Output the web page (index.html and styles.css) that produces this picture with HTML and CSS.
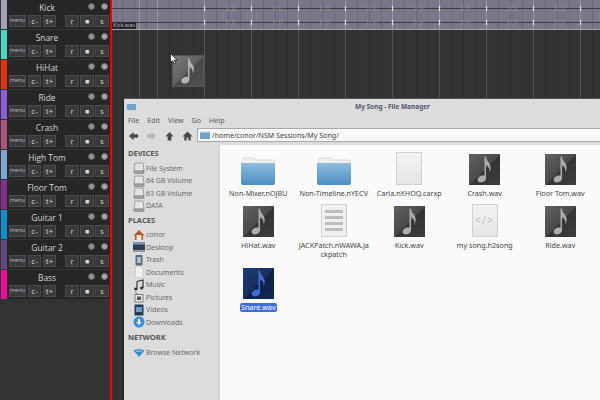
FILE: index.html
```html
<!DOCTYPE html>
<html lang="en">

<head>
    <meta charset="UTF-8">
    <title>My Song - File Manager</title>
    <link rel="stylesheet" href="styles.css">
</head>

<body>
    <svg class="defs" width="0" height="0">
        <defs>
            <linearGradient id="gGrey" x1="0" y1="0" x2="1" y2="1">
                <stop offset="0" stop-color="#626262" />
                <stop offset="0.5" stop-color="#4a4a4a" />
                <stop offset="0.52" stop-color="#343434" />
                <stop offset="1" stop-color="#3e3e3e" />
            </linearGradient>
            <linearGradient id="gDrag" x1="0" y1="0" x2="1" y2="1">
                <stop offset="0" stop-color="#7a7a7a" />
                <stop offset="0.5" stop-color="#606060" />
                <stop offset="0.52" stop-color="#484848" />
                <stop offset="1" stop-color="#505050" />
            </linearGradient>
            <linearGradient id="gBlue" x1="0" y1="0" x2="1" y2="1">
                <stop offset="0" stop-color="#1f3c78" />
                <stop offset="0.5" stop-color="#18305f" />
                <stop offset="0.52" stop-color="#0f2048" />
                <stop offset="1" stop-color="#14285a" />
            </linearGradient>
            <linearGradient id="gFolder" x1="0" y1="0" x2="0" y2="1">
                <stop offset="0" stop-color="#8fbcdc" />
                <stop offset="1" stop-color="#4a8fc4" />
            </linearGradient>
            <symbol id="note" viewBox="0 0 30 30">
                <path d="M15 2.500h1.300c.4 3 1.700 4.400 3.100 6.200 1.700 2.200 2.300 5.300.4 9.300 .4-3.600-.7-6-3.300-7.300v12.500c0 2.400-2.400 4.300-5 4.300-2 0-3.200-1-3.200-2.500 0-2.500 2.700-4.300 5-4.300.7 0 1.300.1 1.700.4z" />
            </symbol>
            <symbol id="folder" viewBox="0 0 34 28">
                <path d="M2 3q0-2 2-2h9l2 2h17q2 0 2 2v4H2z" fill="#f0f0f0" stroke="#c8c8c8" stroke-width=".6" />
                <path d="M0 6h34v20q0 2-2 2H2q-2 0-2-2z" fill="url(#gFolder)" />
            </symbol>
            <symbol id="drive" viewBox="0 0 12 12">
                <path d="M2 1h8l1 8H1z" fill="#e4e4e4" stroke="#8d8d8d" stroke-width=".8" />
                <rect x="1" y="9" width="10" height="2.500" fill="#a0a0a0" stroke="#777" stroke-width=".5" />
            </symbol>
        </defs>
    </svg>

    <div class="app">
        <div class="tracks">
            <div class="track">
                <div class="strip c-kick"></div>
                <div class="track-body">
                    <div class="track-top"><span class="track-name">Kick</span><i class="dot"></i><i class="dot alt"></i></div>
                    <div class="track-btns"><b class="btn w-menu">menu</b><b class="btn">c-</b><b class="btn">t+</b><b class="btn wide right">r</b><b class="btn wide">■</b><b class="btn wide">s</b></div>
                </div>
            </div>
            <div class="track">
                <div class="strip c-snare"></div>
                <div class="track-body">
                    <div class="track-top"><span class="track-name">Snare</span><i class="dot"></i><i class="dot alt"></i></div>
                    <div class="track-btns"><b class="btn w-menu">menu</b><b class="btn">c-</b><b class="btn">t+</b><b class="btn wide right">r</b><b class="btn wide">■</b><b class="btn wide">s</b></div>
                </div>
            </div>
            <div class="track">
                <div class="strip c-hihat"></div>
                <div class="track-body">
                    <div class="track-top"><span class="track-name">HiHat</span><i class="dot"></i><i class="dot alt"></i></div>
                    <div class="track-btns"><b class="btn w-menu">menu</b><b class="btn">c-</b><b class="btn">t+</b><b class="btn wide right">r</b><b class="btn wide">■</b><b class="btn wide">s</b></div>
                </div>
            </div>
            <div class="track">
                <div class="strip c-ride"></div>
                <div class="track-body">
                    <div class="track-top"><span class="track-name">Ride</span><i class="dot"></i><i class="dot alt"></i></div>
                    <div class="track-btns"><b class="btn w-menu">menu</b><b class="btn">c-</b><b class="btn">t+</b><b class="btn wide right">r</b><b class="btn wide">■</b><b class="btn wide">s</b></div>
                </div>
            </div>
            <div class="track">
                <div class="strip c-crash"></div>
                <div class="track-body">
                    <div class="track-top"><span class="track-name">Crash</span><i class="dot"></i><i class="dot alt"></i></div>
                    <div class="track-btns"><b class="btn w-menu">menu</b><b class="btn">c-</b><b class="btn">t+</b><b class="btn wide right">r</b><b class="btn wide">■</b><b class="btn wide">s</b></div>
                </div>
            </div>
            <div class="track">
                <div class="strip c-high"></div>
                <div class="track-body">
                    <div class="track-top"><span class="track-name">High Tom</span><i class="dot"></i><i class="dot alt"></i></div>
                    <div class="track-btns"><b class="btn w-menu">menu</b><b class="btn">c-</b><b class="btn">t+</b><b class="btn wide right">r</b><b class="btn wide">■</b><b class="btn wide">s</b></div>
                </div>
            </div>
            <div class="track">
                <div class="strip c-floor"></div>
                <div class="track-body">
                    <div class="track-top"><span class="track-name">Floor Tom</span><i class="dot"></i><i class="dot alt"></i></div>
                    <div class="track-btns"><b class="btn w-menu">menu</b><b class="btn">c-</b><b class="btn">t+</b><b class="btn wide right">r</b><b class="btn wide">■</b><b class="btn wide">s</b></div>
                </div>
            </div>
            <div class="track">
                <div class="strip c-gtr1"></div>
                <div class="track-body">
                    <div class="track-top"><span class="track-name">Guitar 1</span><i class="dot"></i><i class="dot alt"></i></div>
                    <div class="track-btns"><b class="btn w-menu">menu</b><b class="btn">c-</b><b class="btn">t+</b><b class="btn wide right">r</b><b class="btn wide">■</b><b class="btn wide">s</b></div>
                </div>
            </div>
            <div class="track">
                <div class="strip c-gtr2"></div>
                <div class="track-body">
                    <div class="track-top"><span class="track-name">Guitar 2</span><i class="dot"></i><i class="dot alt"></i></div>
                    <div class="track-btns"><b class="btn w-menu">menu</b><b class="btn">c-</b><b class="btn">t+</b><b class="btn wide right">r</b><b class="btn wide">■</b><b class="btn wide">s</b></div>
                </div>
            </div>
            <div class="track">
                <div class="strip c-bass"></div>
                <div class="track-body">
                    <div class="track-top"><span class="track-name">Bass</span><i class="dot"></i><i class="dot alt"></i></div>
                    <div class="track-btns"><b class="btn w-menu">menu</b><b class="btn">c-</b><b class="btn">t+</b><b class="btn wide right">r</b><b class="btn wide">■</b><b class="btn wide">s</b></div>
                </div>
            </div>
        </div>

        <div class="timeline">
            <div class="clip">
                <svg class="wave" width="488" height="29">
                    <defs>
                        <pattern id="hits" x="0" y="0" width="47" height="29" patternUnits="userSpaceOnUse">
                            <path d="M45.500 6v5M45.500 20v5" stroke="#e4e4e8" stroke-width="1.200" />
                            <path d="M21 6.500v4l2-2zM27 6.500v4l2-2zM21 20.500v4l2-2zM27 20.500v4l2-2z" fill="#2c2a32" stroke="#c8c6d0" stroke-width=".5" />
                        </pattern>
                    </defs>
                    <path d="M0 8.500h488M0 22.500h488" stroke="#3c3a44" stroke-width="1.200" />
                    <rect x="90" width="398" height="29" fill="url(#hits)" />
                </svg>
                <span class="clip-label">Kick.wav</span>
            </div>
        </div>
    </div>

    <div class="drag-icon"><svg width="30" height="30">
            <rect width="30" height="30" fill="url(#gDrag)" />
            <use href="#note" width="30" height="30" fill="#b4b4b4" />
        </svg></div>
    <svg class="cursor" width="8" height="12" viewBox="0 0 8 12">
        <path d="M.5.500v9l2.200-2 1.500 3.500 1.500-.7-1.500-3.300h3z" fill="#fff" stroke="#111" stroke-width=".7" />
    </svg>

    <div class="window">
        <div class="titlebar">
            <svg class="title-icon" width="9" height="8" viewBox="0 0 9 8">
                <rect width="9" height="8" fill="#6fa3cb" />
                <rect width="9" height="2" fill="#d9e3ea" />
            </svg>
            <span class="title-text">My Song - File Manager</span>
        </div>
        <div class="menubar"><span>File</span><span>Edit</span><span>View</span><span>Go</span><span>Help</span></div>
        <div class="toolbar">
            <svg class="tool" width="11" height="12" viewBox="0 0 12 12"><path d="M6 1.500 1 6l5 4.500V8h5V4H6z" fill="#4a4a4a" /></svg>
            <svg class="tool" width="11" height="12" viewBox="0 0 12 12"><path d="M6 1.500 11 6l-5 4.500V8H1V4h5z" fill="#b4b4b4" /></svg>
            <svg class="tool" width="11" height="12" viewBox="0 0 12 12"><path d="M6 1.500 1.500 6.500H4V11h4V6.500h2.500z" fill="#4a4a4a" /></svg>
            <svg class="tool" width="11" height="12" viewBox="0 0 12 12"><path d="M6 1 .5 6.500H2.500V11H5V8h2v3h2.500V6.500h2z" fill="#4a4a4a" /></svg>
            <div class="path-entry">
                <svg width="10" height="8" viewBox="0 0 10 8"><rect width="10" height="8" fill="#6fa3cb" /><rect width="10" height="1.500" fill="#d9e3ea" /></svg>
                <span>/home/conor/NSM Sessions/My Song/</span>
            </div>
        </div>
        <div class="panes">
            <div class="side">
                <h4>DEVICES</h4>
                <ul>
                    <li><svg width="12" height="12"><use href="#drive" /></svg>File System</li>
                    <li><svg width="12" height="12"><use href="#drive" /></svg>64 GB Volume</li>
                    <li><svg width="12" height="12"><use href="#drive" /></svg>63 GB Volume</li>
                    <li><svg width="12" height="12"><use href="#drive" /></svg>DATA</li>
                </ul>
                <h4>PLACES</h4>
                <ul>
                    <li><svg width="12" height="12" viewBox="0 0 12 12"><path d="M6 1 .5 6.500H2V11h8V6.500h1.500z" fill="#b3552a" /><rect x="3.500" y="6" width="5" height="5" fill="#efe6d8" /></svg>conor</li>
                    <li><svg width="12" height="12" viewBox="0 0 12 12"><rect y="1.500" width="12" height="9" fill="#2f3d4e" /><rect y="1.500" width="12" height="2" fill="#7a9cc0" /><rect y="9" width="12" height="1.500" fill="#99a3ad" /></svg>Desktop</li>
                    <li><svg width="12" height="12" viewBox="0 0 12 12"><rect x="2.500" y="1" width="7" height="10.500" rx="1" fill="#5e6b78" /><rect x="4" y="3" width="4" height="6" fill="#a9bfd2" /></svg>Trash</li>
                    <li><svg width="12" height="12" viewBox="0 0 12 12"><path d="M2.500.500h5l2.500 3v8h-7.500z" fill="#f1f1f1" stroke="#c9c9c9" stroke-width=".7" /></svg>Documents</li>
                    <li><svg width="12" height="12" viewBox="0 0 12 12"><path d="M4 2.500 10 1v8M4 2.500V10.500" fill="none" stroke="#333" stroke-width="1.200" /><circle cx="2.700" cy="10" r="1.600" fill="#333" /><circle cx="8.700" cy="9" r="1.600" fill="#333" /></svg>Music</li>
                    <li><svg width="12" height="12" viewBox="0 0 12 12"><rect x="2" y="3.500" width="8" height="7.500" fill="#e6e6e6" stroke="#666" stroke-width=".8" /><rect x="4" y="5.500" width="4" height="3.500" fill="#555" /><path d="M2 1l3 2.500" stroke="#666" /></svg>Pictures</li>
                    <li><svg width="12" height="12" viewBox="0 0 12 12"><rect x="1.500" y=".500" width="9" height="11" fill="#233a55" /><rect x="3" y="3" width="6" height="5" fill="#6f9dc7" /></svg>Videos</li>
                    <li><svg width="12" height="12" viewBox="0 0 12 12"><circle cx="6" cy="6" r="5.500" fill="#3f8cd8" /><path d="M5 3h2v3h1.800L6 9 3.200 6H5z" fill="#fff" /></svg>Downloads</li>
                </ul>
                <h4 class="net">NETWORK</h4>
                <ul>
                    <li><svg width="12" height="12" viewBox="0 0 12 12"><path d="M.5 4.500Q6 1.500 11.500 4.500L6 11z" fill="#3d8ac9" /><path d="M3 5.500Q6 4 9 5.500" stroke="#cfe3f3" stroke-width=".8" fill="none" /></svg>Browse Network</li>
                </ul>
            </div>
            <div class="files">
                <div class="file"><div class="thumb"><svg width="34" height="28"><use href="#folder" /></svg></div><span>Non-Mixer.nOJBU</span></div>
                <div class="file"><div class="thumb"><svg width="34" height="28"><use href="#folder" /></svg></div><span>Non-Timeline.nYECV</span></div>
                <div class="file"><div class="thumb"><div class="page"></div></div><span>Carla.nXHOQ.carxp</span></div>
                <div class="file"><div class="thumb"><svg class="wav" width="31" height="31"><rect width="31" height="31" fill="url(#gGrey)" /><use href="#note" width="31" height="31" fill="#adadad" /></svg></div><span>Crash.wav</span></div>
                <div class="file"><div class="thumb"><svg class="wav" width="31" height="31"><rect width="31" height="31" fill="url(#gGrey)" /><use href="#note" width="31" height="31" fill="#adadad" /></svg></div><span>Floor Tom.wav</span></div>

                <div class="file"><div class="thumb"><svg class="wav" width="31" height="31"><rect width="31" height="31" fill="url(#gGrey)" /><use href="#note" width="31" height="31" fill="#adadad" /></svg></div><span>HiHat.wav</span></div>
                <div class="file"><div class="thumb"><div class="page lines"><i></i><i></i><i></i><i></i></div></div><span>JACKPatch.nWAWA.ja<br>ckpatch</span></div>
                <div class="file"><div class="thumb"><svg class="wav" width="31" height="31"><rect width="31" height="31" fill="url(#gGrey)" /><use href="#note" width="31" height="31" fill="#adadad" /></svg></div><span>Kick.wav</span></div>
                <div class="file"><div class="thumb"><div class="page code">&lt;/&gt;</div></div><span>my song.h2song</span></div>
                <div class="file"><div class="thumb"><svg class="wav" width="31" height="31"><rect width="31" height="31" fill="url(#gGrey)" /><use href="#note" width="31" height="31" fill="#adadad" /></svg></div><span>Ride.wav</span></div>

                <div class="file picked"><div class="thumb"><svg class="wav" width="31" height="31"><rect width="31" height="31" fill="url(#gBlue)" /><use href="#note" width="31" height="31" fill="#3f6fd0" /></svg></div><span>Snare.wav</span></div>
            </div>
        </div>
    </div>
</body>

</html>
```

FILE: styles.css
```css
* {
    padding: 0;
    margin: 0;
    box-sizing: border-box;
}
html, body {
    width: 600px;
    height: 400px;
    overflow: hidden;
}
body {
    position: relative;
    background: #333;
    font-family: "Noto Sans", "Open Sans", sans-serif;
}
li {
    list-style: none;
}
.defs {
    display: block;
    height: 0;
}
.app {
    display: flex;
    height: 400px;
}

/* track list */
.tracks {
    width: 110px;
    height: 400px;
    padding-left: 1px;
    background: #333;
    flex: none;
}
.track {
    display: flex;
    height: 30px;
    background: #262626;
    border-bottom: 1px solid #333;
}
.strip {
    width: 6px;
    flex: none;
}
.c-kick { background: #a4a2b8; }
.c-snare { background: #4fd5c2; }
.c-hihat { background: #e5330c; }
.c-ride { background: #8a5ed8; }
.c-crash { background: #a8557c; }
.c-high { background: #7fa6d2; }
.c-floor { background: #82308c; }
.c-gtr1 { background: #1190cc; }
.c-gtr2 { background: #5f4a80; }
.c-bass { background: #ec1098; }
.track-body {
    flex: 1;
    padding: 1px 0 0 2px;
}
.track-top {
    display: flex;
    align-items: flex-start;
    height: 14px;
}
.track-name {
    width: 76px;
    text-align: center;
    font-family: "Open Sans", sans-serif;
    font-size: 8.400px;
    line-height: 13px;
    color: #d8d8d8;
}
.dot {
    width: 7px;
    height: 7px;
    margin: 2px 3px 0 3px;
    border-radius: 50%;
    background: #8c8c8c;
    border: 1px solid #5c5c5c;
    box-shadow: inset 0 0 0 1px #a0a0a0;
}
.dot.alt {
    background: #a8a8a8;
    border-color: #707070;
}
.track-btns {
    display: flex;
    gap: 2px;
}
.btn {
    display: flex;
    align-items: center;
    justify-content: center;
    width: 13px;
    height: 12px;
    font-family: "Open Sans", sans-serif;
    font-weight: normal;
    font-size: 8px;
    line-height: 1;
    color: #dcdcdc;
    background: #3a3a3a;
    border: 1px solid #4c4c4c;
}
.w-menu {
    width: 17px;
    font-size: 5.500px;
    color: #b4bccc;
}
.wide {
    width: 14px;
    margin-right: -1px;
    font-size: 7px;
}
.right {
    margin-left: 7px;
}

/* timeline */
.timeline {
    flex: 1;
    height: 400px;
    border-left: 2px solid #f00000;
    background-color: #333;
    background-image:
        repeating-linear-gradient(90deg, #555 0, #555 1px, transparent 1px, transparent 47px),
        repeating-linear-gradient(90deg, #2c2c2c 0, #2c2c2c 1px, transparent 1px, transparent 11.750px);
    background-position: 45px 0, 10px 0;
}
.clip {
    position: relative;
    height: 30px;
    background-color: #7a7888;
    background-image:
        repeating-linear-gradient(90deg, #9a98a8 0, #9a98a8 1px, transparent 1px, transparent 47px),
        repeating-linear-gradient(90deg, #6b6979 0, #6b6979 1px, transparent 1px, transparent 11.750px);
    background-position: 45px 0, 10px 0;
    border-bottom: 1px solid #a5a3b1;
}
.wave {
    display: block;
}
.clip-label {
    position: absolute;
    left: 0;
    top: 22px;
    height: 7px;
    padding: 0 1px;
    background: #26262b;
    color: #b8b8b8;
    font-size: 5.500px;
    line-height: 7px;
}
.drag-icon {
    position: absolute;
    left: 173px;
    top: 56px;
    width: 30px;
    height: 30px;
    line-height: 0;
    outline: 1px solid #555;
}
.cursor {
    position: absolute;
    left: 170px;
    top: 53px;
}

/* file manager window */
.window {
    position: absolute;
    left: 123px;
    top: 98px;
    width: 477px;
    height: 302px;
    border-left: 1px solid #222;
    border-top: 1px solid #555;
    background: #dcdcdc;
    font-size: 7.100px;
    color: #555;
}
.titlebar {
    height: 14px;
    display: flex;
    align-items: center;
    padding-left: 3px;
}
.title-text {
    margin-left: 219px;
    font-weight: bold;
    font-size: 6.500px;
    color: #50566a;
}
.menubar {
    display: flex;
    gap: 8px;
    height: 14px;
    align-items: center;
    padding-left: 4px;
    color: #5a5a5a;
}
.toolbar {
    display: flex;
    align-items: center;
    gap: 7px;
    height: 18px;
    padding-left: 4px;
}
.path-entry {
    flex: 1;
    display: flex;
    align-items: center;
    gap: 2px;
    height: 14px;
    margin-left: -3px;
    margin-bottom: 2px;
    padding-left: 2px;
    background: #f8f8f8;
    border: 1px solid #a8a8a8;
    border-right: 0;
    color: #444;
}
.panes {
    display: flex;
    height: 256px;
}
.side {
    width: 96px;
    flex: none;
    padding: 2px 0 0 4px;
    font-size: 7px;
    border-right: 1px solid #cfcfcf;
}
.side h4 {
    font-size: 7.500px;
    height: 13px;
    line-height: 13px;
    color: #555;
}
.side .net {
    margin-top: 1px;
}
.side ul {
    padding: 2px 0 1.500px 5px;
}
.side li {
    display: flex;
    align-items: center;
    gap: 1px;
    height: 12.500px;
    color: #6a6a6a;
}
.side svg {
    flex: none;
}
.files {
    flex: 1;
    display: grid;
    grid-template-columns: repeat(5, 75.500px);
    grid-template-rows: 52px 62px 60px;
    align-content: start;
    padding: 7px 0 0 .500px;
    background: #fafafa;
}
.file {
    display: flex;
    flex-direction: column;
    align-items: center;
    text-align: center;
    line-height: 9px;
    font-size: 7.200px;
    color: #444;
}
.thumb {
    display: flex;
    align-items: flex-end;
    justify-content: center;
    height: 33px;
    margin-bottom: 4px;
}
.wav {
    display: block;
}
.page {
    width: 26px;
    height: 33px;
    background: linear-gradient(#f2f2f2, #e6e6e6);
    border: 1px solid #d0d0d0;
}
.lines {
    padding: 5px 3px;
    background: #f0f0f0;
}
.lines i {
    display: block;
    height: 3px;
    margin-bottom: 3px;
    background: #bdbdbd;
}
.code {
    font-size: 10px;
    letter-spacing: 1.500px;
    line-height: 30px;
    text-align: center;
    white-space: nowrap;
    color: #bcbcbc;
}
.picked span {
    padding: 0 1px;
    border-radius: 2px;
    background: #3f6fd8;
    color: #fff;
}
```
